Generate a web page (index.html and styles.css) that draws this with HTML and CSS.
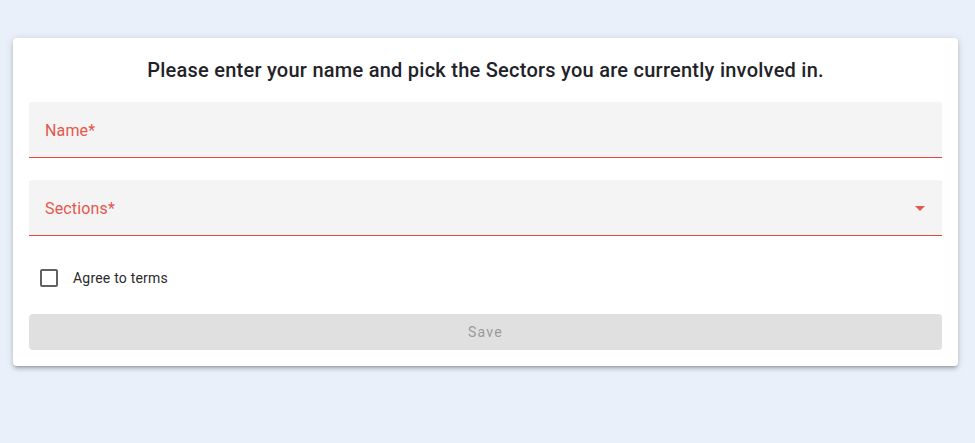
FILE: index.html
```html
<!DOCTYPE html>
<html lang="en">
<head>
<meta charset="utf-8">
<title>Sectors</title>
<link rel="stylesheet" href="styles.css">
</head>
<body>
<main class="page">
  <form class="card">
    <h1 class="title">Please enter your name and pick the Sectors you are currently involved in.</h1>
    <div class="field">
      <span class="label">Name*</span>
    </div>
    <div class="field select">
      <span class="label">Sections*</span>
      <span class="arrow"></span>
    </div>
    <label class="check-row">
      <span class="box"></span>
      <span class="check-label">Agree to terms</span>
    </label>
    <button type="button" class="save" disabled>Save</button>
  </form>
</main>
</body>
</html>
```
FILE: styles.css
```css
* { box-sizing: border-box; }
html, body {
  margin: 0;
  height: 100%;
}
body {
  background: #eaf0f9;
  font-family: Roboto, "Noto Sans", Arial, sans-serif;
}
.page {
  padding: 38px 17px 0 13px;
}
.card {
  background: #fff;
  border-radius: 4px;
  padding: 16px;
  box-shadow: 0 3px 3px -2px rgba(0,0,0,.2), 0 3px 4px 0 rgba(0,0,0,.14), 0 1px 8px 0 rgba(0,0,0,.12);
  display: flex;
  flex-direction: column;
}
.title {
  margin: 0 0 16px;
  font-size: 20px;
  line-height: 32px;
  font-weight: 500;
  text-align: center;
  color: #1f2329;
  letter-spacing: 0.25px;
}
.field {
  height: 56px;
  background: #f4f4f4;
  border-radius: 4px 4px 0 0;
  box-shadow: inset 0 -1px 0 #e0463b;
  display: flex;
  align-items: center;
  padding: 0 16px;
  margin-bottom: 22px;
}
.label {
  color: #e4574c;
  font-size: 16px;
  letter-spacing: 0.15px;
  flex: 1;
  padding-top: 1px;
}
.arrow {
  width: 0;
  height: 0;
  border-left: 5px solid transparent;
  border-right: 5px solid transparent;
  border-top: 5px solid #e4574c;
  margin-right: 1px;
}
.check-row {
  height: 40px;
  display: flex;
  align-items: center;
  padding-left: 11px;
  margin-bottom: 16px;
}
.box {
  width: 18px;
  height: 18px;
  border: 2px solid #616161;
  border-radius: 2px;
}
.check-label {
  margin-left: 15px;
  font-size: 14px;
  color: #2b2b2b;
  letter-spacing: 0.2px;
  margin-top: -1px;
}
.save {
  height: 36px;
  border: none;
  border-radius: 4px;
  background: #e0e0e0;
  color: #9a9a9a;
  font-family: inherit;
  font-size: 14px;
  font-weight: 400;
  letter-spacing: 1.25px;
}
```
